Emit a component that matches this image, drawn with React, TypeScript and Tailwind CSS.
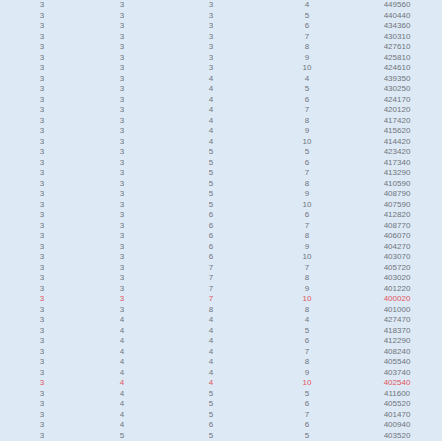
import React from "react";

const rows: [number, number, number, number, number, boolean][] = [
  [3, 3, 3, 4, 449560, false],
  [3, 3, 3, 5, 440440, false],
  [3, 3, 3, 6, 434360, false],
  [3, 3, 3, 7, 430310, false],
  [3, 3, 3, 8, 427610, false],
  [3, 3, 3, 9, 425810, false],
  [3, 3, 3, 10, 424610, false],
  [3, 3, 4, 4, 439350, false],
  [3, 3, 4, 5, 430250, false],
  [3, 3, 4, 6, 424170, false],
  [3, 3, 4, 7, 420120, false],
  [3, 3, 4, 8, 417420, false],
  [3, 3, 4, 9, 415620, false],
  [3, 3, 4, 10, 414420, false],
  [3, 3, 5, 5, 423420, false],
  [3, 3, 5, 6, 417340, false],
  [3, 3, 5, 7, 413290, false],
  [3, 3, 5, 8, 410590, false],
  [3, 3, 5, 9, 408790, false],
  [3, 3, 5, 10, 407590, false],
  [3, 3, 6, 6, 412820, false],
  [3, 3, 6, 7, 408770, false],
  [3, 3, 6, 8, 406070, false],
  [3, 3, 6, 9, 404270, false],
  [3, 3, 6, 10, 403070, false],
  [3, 3, 7, 7, 405720, false],
  [3, 3, 7, 8, 403020, false],
  [3, 3, 7, 9, 401220, false],
  [3, 3, 7, 10, 400020, true],
  [3, 3, 8, 8, 401000, false],
  [3, 4, 4, 4, 427470, false],
  [3, 4, 4, 5, 418370, false],
  [3, 4, 4, 6, 412290, false],
  [3, 4, 4, 7, 408240, false],
  [3, 4, 4, 8, 405540, false],
  [3, 4, 4, 9, 403740, false],
  [3, 4, 4, 10, 402540, true],
  [3, 4, 5, 5, 411600, false],
  [3, 4, 5, 6, 405520, false],
  [3, 4, 5, 7, 401470, false],
  [3, 4, 6, 6, 400940, false],
  [3, 5, 5, 5, 403520, false],
];

export default function App() {
  return (
    <div className="w-[442px] h-[443px] bg-white overflow-hidden" style={{ fontFamily: '"Liberation Sans", Arial, sans-serif' }}>
      <div className="bg-[#dde9f5] w-full">
        {rows.map((r, i) => (
          <div
            key={i}
            className={`grid grid-cols-[84px_76px_102px_90px_90px] h-[10.5px] items-center text-[8px] leading-[10.5px] text-center ${
              r[5] ? "text-[#e25560]" : "text-[#70757c]"
            }`}
          >
            <span>{r[0]}</span>
            <span>{r[1]}</span>
            <span>{r[2]}</span>
            <span>{r[3]}</span>
            <span>{r[4]}</span>
          </div>
        ))}
      </div>
    </div>
  );
}
